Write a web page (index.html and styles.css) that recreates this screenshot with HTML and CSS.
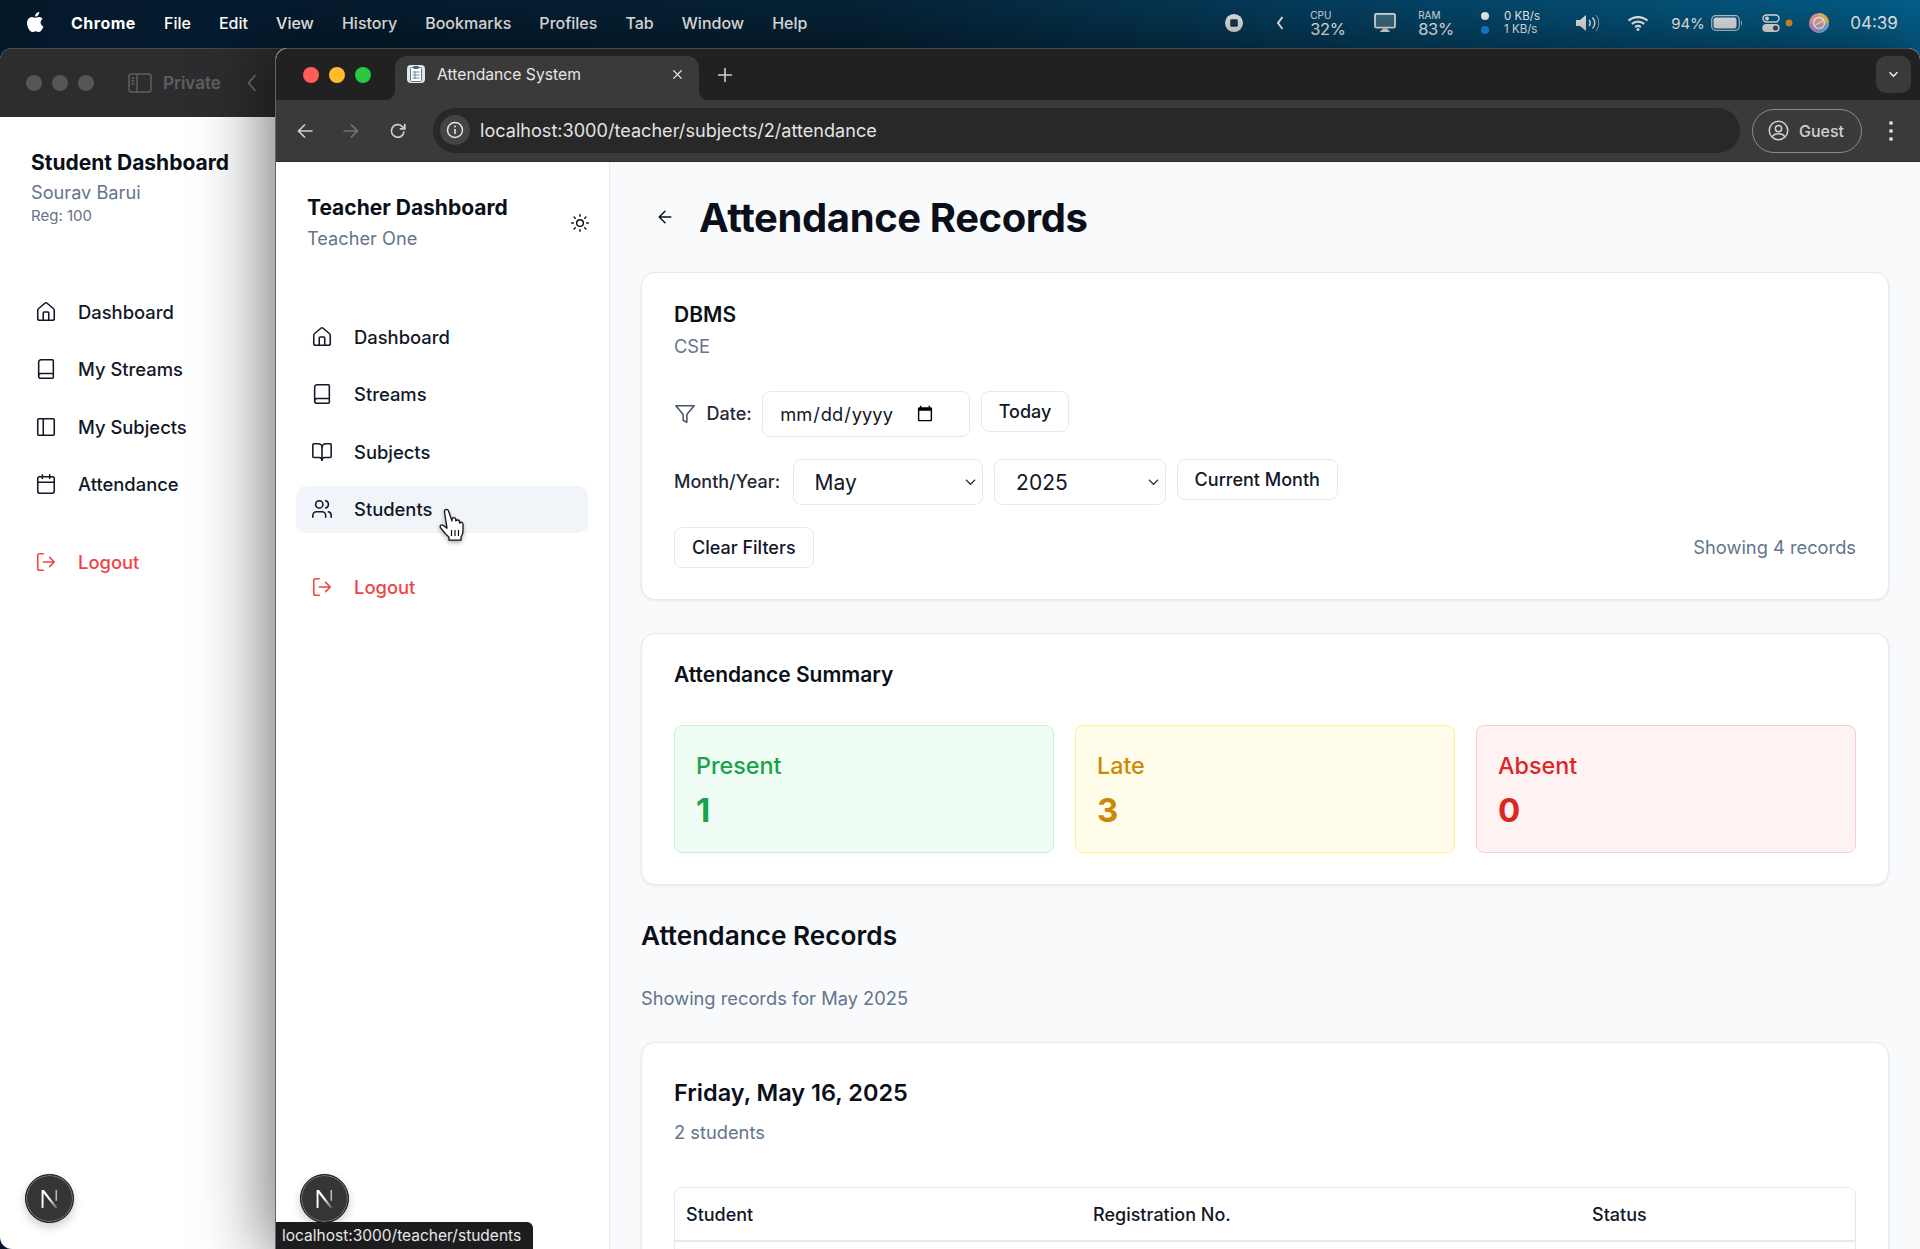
FILE: index.html
```html
<!DOCTYPE html>
<html lang="en">
<head>
<meta charset="utf-8">
<title>Attendance System</title>
<link rel="stylesheet" href="styles.css">
</head>
<body>
<div class="desktop">
  <header class="menubar">
    <svg class="apple" viewBox="0 0 20 24" width="20" height="24"><path fill="#fff" d="M14.6 12.6c0-2.5 2-3.7 2.1-3.8-1.2-1.7-3-1.9-3.6-1.9-1.5-.2-3 .9-3.8.9s-2-.9-3.3-.9c-1.7 0-3.3 1-4.1 2.5-1.8 3-.5 7.6 1.2 10.1.9 1.2 1.9 2.6 3.2 2.5 1.3 0 1.8-.8 3.3-.8s2 .8 3.3.8c1.4 0 2.2-1.2 3.1-2.5 1-1.4 1.4-2.8 1.4-2.9-.1 0-2.8-1.1-2.8-4zM12.100 5.200c.7-.9 1.200-2.100 1.100-3.300-1 0-2.300.7-3 1.500-.7.800-1.300 2-1.100 3.200 1.100.1 2.300-.6 3-1.400z"/></svg>
    <nav class="menus">
      <span class="menu-app">Chrome</span><span>File</span><span>Edit</span><span>View</span><span>History</span><span>Bookmarks</span><span>Profiles</span><span>Tab</span><span>Window</span><span>Help</span>
    </nav>
    <div class="status">
      <span class="st st-stop"><svg viewBox="0 0 20 20" width="19" height="19"><circle cx="10" cy="10" r="9.500" fill="#f2f2f2"/><rect x="6" y="6" width="8" height="8" rx="1.500" fill="#123b52"/></svg></span>
      <span class="st st-chev"><svg viewBox="0 0 8 14" width="8" height="14"><path d="M6.500 1 2 7l4.500 6" fill="none" stroke="#fff" stroke-width="2"/></svg></span>
      <span class="st st-cpu meter"><small>CPU</small><b>32%</b></span>
      <span class="st st-mon"><svg viewBox="0 0 24 22" width="23" height="20"><rect x="1" y="1" width="22" height="15" rx="1.500" fill="#3f6f85" stroke="#f0f0f0" stroke-width="2"/><path d="M9 17h6v2h2v2H7v-2h2z" fill="#f0f0f0"/></svg></span>
      <span class="st st-ram meter"><small>RAM</small><b>83%</b></span>
      <span class="st st-dots"><i class="dot-w"></i><i class="dot-b"></i></span>
      <span class="st st-net"><span>0 KB/s</span><span>1 KB/s</span></span>
      <span class="st st-vol"><svg viewBox="0 0 26 20" width="26" height="20"><path d="M1 7h4l6-5v16l-6-5H1z" fill="#f2f2f2"/><path d="M14 7c1.500 1.800 1.500 4.200 0 6M17.500 4.500c2.700 3.300 2.700 7.700 0 11" fill="none" stroke="#f2f2f2" stroke-width="1.500"/><path d="M21 2c3.700 4.800 3.700 11.200 0 16" fill="none" stroke="#9db5c2" stroke-width="1"/></svg></span>
      <span class="st st-wifi"><svg viewBox="0 0 24 18" width="23" height="17"><path d="M2 6.500c5.800-5 14.200-5 20 0M5.500 10c3.800-3.300 9.200-3.300 13 0M9 13.400c1.800-1.500 4.200-1.500 6 0" fill="none" stroke="#fff" stroke-width="2.300"/><circle cx="12" cy="16" r="1.600" fill="#fff"/></svg></span>
      <span class="st st-pct">94%</span>
      <span class="st st-batt"><svg viewBox="0 0 32 16" width="32" height="16"><rect x=".7" y=".7" width="27.600" height="14.600" rx="4" fill="none" stroke="#c5d4dc" stroke-width="1.200"/><rect x="2.500" y="2.500" width="23" height="11" rx="2.500" fill="#f0f0f0"/><path d="M30 5.500c1.300.5 1.300 4.500 0 5z" fill="#c5d4dc"/></svg></span>
      <span class="st st-ctrl"><svg viewBox="0 0 18 18" width="18" height="18"><rect x="1" y="1" width="16" height="7" rx="3.500" fill="none" stroke="#f2f2f2" stroke-width="1.400"/><circle cx="5" cy="4.500" r="2" fill="#f2f2f2"/><rect x=".3" y="10" width="17.400" height="8" rx="4" fill="#f2f2f2"/><circle cx="13.500" cy="14" r="2.500" fill="#33566a"/></svg></span>
      <span class="st st-orange"></span>
      <span class="st st-avatar"><svg viewBox="0 0 20 20" width="20" height="20"><circle cx="10" cy="10" r="10" fill="#f4a7a0"/><path d="M10 0a10 10 0 0 1 10 10h-6z" fill="#f6c94f"/><path d="M0 10a10 10 0 0 0 10 10l1-7z" fill="#c49be8"/><path d="M20 10a10 10 0 0 1-10 10l2-8z" fill="#7fbdf0"/><circle cx="10" cy="10" r="5.500" fill="none" stroke="#fff" stroke-width="1.500"/><path d="M5 13 15 7" stroke="#fff" stroke-width="1.200"/></svg></span>
      <span class="st st-time">04:39</span>
    </div>
  </header>

  <section class="win win-back">
    <div class="back-title">
      <span class="gl"></span><span class="gl"></span><span class="gl"></span>
      <svg class="back-panel" viewBox="0 0 24 20" width="24" height="20"><rect x="1" y="1" width="22" height="18" rx="2.500" fill="none" stroke="#5f5f61" stroke-width="1.500"/><path d="M9 1v18M3.500 5h3M3.500 8h3M3.500 11h3" stroke="#5f5f61" stroke-width="1.500" fill="none"/></svg>
      <span class="back-private">Private</span>
      <svg class="back-chev" viewBox="0 0 10 18" width="10" height="18"><path d="M8.500 1 1.500 9l7 8" fill="none" stroke="#6c6c6e" stroke-width="1.800"/></svg>
    </div>
    <aside class="sidebar sidebar-back">
      <div class="side-head">
        <div>
          <div class="side-title">Student Dashboard</div>
          <div class="side-sub">Sourav Barui</div>
          <div class="side-reg">Reg: 100</div>
        </div>
      </div>
      <nav class="side-nav">
        <a class="nav-item"><svg class="ic" viewBox="0 0 24 24"><path d="M15 21v-8a1 1 0 0 0-1-1h-4a1 1 0 0 0-1 1v8"/><path d="M3 10a2 2 0 0 1 .709-1.528l7-5.999a2 2 0 0 1 2.582 0l7 5.999A2 2 0 0 1 21 10v9a2 2 0 0 1-2 2H5a2 2 0 0 1-2-2z"/></svg>Dashboard</a>
        <a class="nav-item"><svg class="ic" viewBox="0 0 24 24"><path d="M4 19.500v-15A2.500 2.500 0 0 1 6.500 2H19a1 1 0 0 1 1 1v18a1 1 0 0 1-1 1H6.500a1 1 0 0 1 0-5H20"/></svg>My Streams</a>
        <a class="nav-item"><svg class="ic" viewBox="0 0 24 24"><rect x="3" y="3" width="18" height="18" rx="1"/><path d="M9 3v18"/></svg>My Subjects</a>
        <a class="nav-item"><svg class="ic" viewBox="0 0 24 24"><rect x="3" y="4" width="18" height="18" rx="2"/><path d="M16 2v4M8 2v4M3 10h18"/></svg>Attendance</a>
      </nav>
      <a class="nav-item nav-logout"><svg class="ic" viewBox="0 0 24 24"><path d="M9 21H5a2 2 0 0 1-2-2V5a2 2 0 0 1 2-2h4"/><path d="m16 17 5-5-5-5M21 12H9"/></svg>Logout</a>
    </aside>
    <span class="n-badge"><svg viewBox="0 0 20 20" width="24" height="24"><defs><linearGradient id="nb" x1="0" y1="0" x2="1" y2="1"><stop offset=".45" stop-color="#fff"/><stop offset="1" stop-color="#fff" stop-opacity=".15"/></linearGradient></defs><path d="M3 2.500h2L16.500 17.500h-2.200L4.600 5.300v12.200H3z" fill="url(#nb)"/><rect x="14.600" y="2.500" width="1.300" height="9" fill="#bbb"/></svg></span>
  </section>

  <section class="win win-front">
    <div class="tabbar">
      <span class="tl tl-r"></span><span class="tl tl-y"></span><span class="tl tl-g"></span>
      <div class="tab">
        <svg class="favicon" viewBox="0 0 20 20" width="20" height="20"><rect x="1" y="1" width="18" height="18" rx="4" fill="#dfe6ec"/><rect x="4.500" y="3.500" width="11" height="14" rx="1" fill="#fff" stroke="#5d7484"/><rect x="7.500" y="2" width="5" height="3" fill="#4d6678"/><path d="M6.500 8h7M6.500 11h7M6.500 14h7M9 7v8" stroke="#5f90a8"/></svg>
        <span class="tab-label">Attendance System</span>
        <svg class="tab-x" viewBox="0 0 12 12" width="11" height="11"><path d="m1.500 1.500 9 9M10.500 1.500l-9 9" stroke="#e8e8e8" stroke-width="1.500"/></svg>
      </div>
      <svg class="tab-plus" viewBox="0 0 14 14" width="14" height="14"><path d="M7 0v14M0 7h14" stroke="#cfcfcf" stroke-width="1.600"/></svg>
      <span class="tab-menu"><svg viewBox="0 0 12 8" width="11" height="7"><path d="m1.500 1.500 4.500 4.500 4.500-4.500" fill="none" stroke="#eee" stroke-width="1.800"/></svg></span>
    </div>
    <div class="toolbar">
      <svg class="tb-ic tb-back" viewBox="0 0 18 18" width="18" height="18"><path d="M16.500 9h-14M9 2.500 2.500 9 9 15.500" fill="none" stroke="#cfcfcf" stroke-width="1.700"/></svg>
      <svg class="tb-ic tb-fwd" viewBox="0 0 18 18" width="18" height="18"><path d="M1.500 9h14M9 2.500 15.500 9 9 15.500" fill="none" stroke="#757575" stroke-width="1.700"/></svg>
      <svg class="tb-ic tb-reload" viewBox="0 0 18 18" width="18" height="18"><path d="M15 9.500A6.300 6.300 0 1 1 13 4.300L15.500 6.500" fill="none" stroke="#cfcfcf" stroke-width="1.700"/><path d="M15.800 1.800v5h-5" fill="none" stroke="#cfcfcf" stroke-width="1.700"/></svg>
      <div class="omnibox">
        <span class="omni-info"><svg viewBox="0 0 18 18" width="18" height="18"><circle cx="9" cy="9" r="7.500" fill="none" stroke="#e6e6e6" stroke-width="1.500"/><path d="M9 8v5" stroke="#e6e6e6" stroke-width="1.600"/><circle cx="9" cy="5.500" r="1" fill="#e6e6e6"/></svg></span>
        <span class="omni-url">localhost:3000/teacher/subjects/2/attendance</span>
      </div>
      <div class="guest">
        <svg viewBox="0 0 22 22" width="21" height="21"><circle cx="11" cy="11" r="9.700" fill="none" stroke="#d0d0d0" stroke-width="1.600"/><circle cx="11" cy="9" r="3.300" fill="none" stroke="#d0d0d0" stroke-width="1.600"/><path d="M4.500 17.500c2-4.200 11-4.200 13 0" fill="none" stroke="#d0d0d0" stroke-width="1.600"/></svg>
        <span>Guest</span>
      </div>
      <span class="kebab"><i></i><i></i><i></i></span>
    </div>
    <div class="app">
      <aside class="sidebar">
        <div class="side-head">
          <div>
            <div class="side-title">Teacher Dashboard</div>
            <div class="side-sub">Teacher One</div>
          </div>
          <svg class="ic sun" viewBox="0 0 24 24"><circle cx="12" cy="12" r="4"/><path d="M12 2v2M12 20v2M4.930 4.930l1.410 1.410M17.660 17.660l1.410 1.410M2 12h2M20 12h2M6.340 17.660l-1.410 1.410M19.070 4.930l-1.410 1.410"/></svg>
        </div>
        <nav class="side-nav">
          <a class="nav-item"><svg class="ic" viewBox="0 0 24 24"><path d="M15 21v-8a1 1 0 0 0-1-1h-4a1 1 0 0 0-1 1v8"/><path d="M3 10a2 2 0 0 1 .709-1.528l7-5.999a2 2 0 0 1 2.582 0l7 5.999A2 2 0 0 1 21 10v9a2 2 0 0 1-2 2H5a2 2 0 0 1-2-2z"/></svg>Dashboard</a>
          <a class="nav-item"><svg class="ic" viewBox="0 0 24 24"><path d="M4 19.500v-15A2.500 2.500 0 0 1 6.500 2H19a1 1 0 0 1 1 1v18a1 1 0 0 1-1 1H6.500a1 1 0 0 1 0-5H20"/></svg>Streams</a>
          <a class="nav-item"><svg class="ic" viewBox="0 0 24 24"><path d="M12 7v14"/><path d="M3 18a1 1 0 0 1-1-1V4a1 1 0 0 1 1-1h5a4 4 0 0 1 4 4 4 4 0 0 1 4-4h5a1 1 0 0 1 1 1v13a1 1 0 0 1-1 1h-6a3 3 0 0 0-3 3 3 3 0 0 0-3-3z"/></svg>Subjects</a>
          <a class="nav-item nav-hover"><svg class="ic" viewBox="0 0 24 24"><path d="M16 21v-2a4 4 0 0 0-4-4H6a4 4 0 0 0-4 4v2"/><circle cx="9" cy="7" r="4"/><path d="M22 21v-2a4 4 0 0 0-3-3.870M16 3.130a4 4 0 0 1 0 7.750"/></svg>Students</a>
        </nav>
        <a class="nav-item nav-logout"><svg class="ic" viewBox="0 0 24 24"><path d="M9 21H5a2 2 0 0 1-2-2V5a2 2 0 0 1 2-2h4"/><path d="m16 17 5-5-5-5M21 12H9"/></svg>Logout</a>
      </aside>
      <main class="main">
        <div class="page-head">
          <svg class="ic back-arrow" viewBox="0 0 24 24"><path d="m12 19-7-7 7-7M19 12H5"/></svg>
          <h1>Attendance Records</h1>
        </div>
        <section class="card">
          <h3 class="subject">DBMS</h3>
          <p class="stream">CSE</p>
          <div class="filter-row">
            <svg class="ic filter-ic" viewBox="0 0 24 24"><path d="M22 3H2l8 9.460V19l4 2v-8.540z"/></svg>
            <label class="f-label" for="d">Date:</label>
            <input id="d" class="field date-field" type="date">
            <button class="btn">Today</button>
          </div>
          <div class="filter-row">
            <label class="f-label f-month" for="m">Month/Year:</label>
            <select id="m" class="field sel sel-m"><option>May</option></select>
            <select class="field sel sel-y" aria-label="Year"><option>2025</option></select>
            <button class="btn">Current Month</button>
          </div>
          <div class="filter-row filter-last">
            <button class="btn">Clear Filters</button>
            <span class="count">Showing 4 records</span>
          </div>
        </section>
        <section class="card card-summary">
          <h3 class="summary-title">Attendance Summary</h3>
          <div class="stats">
            <div class="stat stat-g"><div class="stat-l">Present</div><div class="stat-n">1</div></div>
            <div class="stat stat-y"><div class="stat-l">Late</div><div class="stat-n">3</div></div>
            <div class="stat stat-r"><div class="stat-l">Absent</div><div class="stat-n">0</div></div>
          </div>
        </section>
        <h2 class="rec-title">Attendance Records</h2>
        <p class="rec-sub">Showing records for May 2025</p>
        <section class="card card-day">
          <h3 class="day-title">Friday, May 16, 2025</h3>
          <p class="day-sub">2 students</p>
          <div class="table">
            <div class="thead"><span class="th-a">Student</span><span class="th-b">Registration No.</span><span>Status</span></div>
            <div class="tbody"></div>
          </div>
        </section>
      </main>
    </div>
    <span class="n-badge"><svg viewBox="0 0 20 20" width="24" height="24"><defs><linearGradient id="nf" x1="0" y1="0" x2="1" y2="1"><stop offset=".45" stop-color="#fff"/><stop offset="1" stop-color="#fff" stop-opacity=".15"/></linearGradient></defs><path d="M3 2.500h2L16.500 17.500h-2.200L4.600 5.300v12.200H3z" fill="url(#nf)"/><rect x="14.600" y="2.500" width="1.300" height="9" fill="#bbb"/></svg></span>
    <div class="status-bubble">localhost:3000/teacher/students</div>
    <svg class="cursor" viewBox="0 0 28 33" width="28" height="33"><path d="M5.500 4c-.6-2.600 3-3.600 4-1L13 13v-2c.5-1.800 3.300-1.800 3.800 0v2c.7-1.500 3.300-1.300 3.700.5V15c1-1.300 3.500-.8 3.500 1.200v7c0 3-1 4.500-2 6v3H10v-3c-3-2.500-6-6-8.500-9.500-1.200-2 1-3.500 2.500-2.500l4 3z" fill="#fff" stroke="#111" stroke-width="1.300" stroke-linejoin="round"/><path d="M12.500 22v6M16 22v6M19.500 22v6" stroke="#111" stroke-width="1.200"/></svg>
  </section>
</div>
</body>
</html>
```

FILE: styles.css
```css
* { box-sizing: border-box; }
html, body { margin: 0; padding: 0; height: 100%; overflow: hidden; }
body { font-family: Inter, "Noto Sans", sans-serif; color: #0b0f19; }
h1, h2, h3, p { margin: 0; }

.desktop { position: relative; width: 1920px; height: 1249px; overflow: hidden; background: linear-gradient(90deg, #04182a 0%, #06253a 45%, #05486c 75%, #04628f 100%); }

/* menu bar */
.menubar { height: 48px; display: flex; align-items: center; color: #fff; font-size: 16px; font-weight: 500; padding-bottom: 2px; }
.apple { margin-left: 26px; margin-top: -2px; }
.menus { display: flex; gap: 28.100px; margin-left: 25px; }
.menu-app { font-weight: 700; letter-spacing: .5px; }
.status { position: absolute; left: 0; right: 0; top: 0; height: 48px; }
.st { position: absolute; top: 23px; transform: translate(-50%, -50%); display: flex; }
.st-stop { left: 1234px; }
.st-chev { left: 1280px; }
.meter { top: 24px; flex-direction: column; }
.meter small { font-size: 10px; font-weight: 400; color: #e4edf2; line-height: 11px; }
.meter b { font-size: 16.500px; font-weight: 400; line-height: 17px; letter-spacing: -.3px; }
.st-cpu { left: 1328px; }
.st-mon { left: 1385px; }
.st-ram { left: 1436px; }
.st-dots { left: 1485px; flex-direction: column; gap: 6px; }
.dot-w, .dot-b { width: 8px; height: 8px; border-radius: 50%; background: #fff; display: block; }
.dot-b { background: #1d8ff2; }
.st-net { left: 1522px; flex-direction: column; font-size: 11.500px; font-weight: 400; line-height: 13px; }
.st-vol { left: 1588px; }
.st-wifi { left: 1638px; }
.st-pct { left: 1688px; font-size: 15px; font-weight: 400; }
.st-batt { left: 1727px; }
.st-ctrl { left: 1771px; }
.st-orange { left: 1789px; width: 7px; height: 7px; border-radius: 50%; background: #e09a2b; }
.st-avatar { left: 1819px; }
.st-time { left: 1874px; font-size: 17px; font-weight: 400; }

/* windows */
.win { position: absolute; top: 48px; bottom: 0; background: #fff; overflow: hidden; }
.win-back { left: 0; width: 340px; border-radius: 12px 0 0 12px; }
.win-front { left: 275px; right: 0; border-radius: 12px 12px 0 0; border-left: 1px solid #666; box-shadow: 0 0 70px 8px rgba(0,0,0,.55); display: flex; flex-direction: column; }

.back-title { height: 69px; background: #2d2d2f; display: flex; align-items: center; padding-left: 26px; border-top: 1px solid #4a4a4c; }
.gl { width: 16px; height: 16px; border-radius: 50%; background: #565658; margin-right: 10px; }
.back-panel { margin-left: 24px; }
.back-private { color: #5f5f61; font-size: 17px; font-weight: 600; margin-left: 11px; }
.back-chev { margin-left: 26px; }

/* front chrome */
.tabbar { height: 52px; background: #212121; border-radius: 12px 12px 0 0; border-top: 1px solid #4a4a4a; display: flex; align-items: flex-end; padding-left: 27px; position: relative; flex: none; }
.tl { width: 16px; height: 16px; border-radius: 50%; margin-right: 10px; align-self: flex-start; margin-top: 18px; }
.tl-r { background: #ff5f57; }
.tl-y { background: #febc2e; }
.tl-g { background: #28c840; }
.tab { position: relative; width: 304px; height: 44px; background: #3a3a3a; border-radius: 12px 12px 0 0; margin-left: 14px; display: flex; align-items: center; padding: 0 16px 8px 11px; color: #e6e6e6; font-size: 15.700px; }
.tab::before, .tab::after { content: ""; position: absolute; bottom: 0; width: 10px; height: 10px; }
.tab::before { left: -10px; background: radial-gradient(circle at 0 0, transparent 10px, #3a3a3a 10.500px); }
.tab::after { right: -10px; background: radial-gradient(circle at 100% 0, transparent 10px, #3a3a3a 10.500px); }
.tab-label { margin-left: 11px; flex: 1; }
.tab-plus { align-self: flex-start; margin: 19px 0 0 19px; }
.tab-menu { position: absolute; right: 9px; top: 7px; width: 35px; height: 37px; background: #3a3a3a; border-radius: 10px; display: flex; align-items: center; justify-content: center; }

.toolbar { height: 62px; background: #3a3a3a; border-bottom: 1px solid #2a2a2a; display: flex; align-items: center; padding-left: 20px; flex: none; }
.tb-fwd { margin-left: 28px; }
.tb-reload { margin-left: 29px; }
.omnibox { margin-left: 26px; width: 1307px; height: 45px; border-radius: 23px; background: #282828; display: flex; align-items: center; padding-left: 7px; margin-bottom: 1px; }
.omni-info { width: 30px; height: 30px; border-radius: 50%; background: #444; display: flex; align-items: center; justify-content: center; }
.omni-url { margin-left: 10px; font-size: 18.100px; color: #e3e3e3; }
.guest { margin-left: 12px; width: 110px; height: 44px; border: 1.500px solid #8b8b8b; border-radius: 22px; display: flex; align-items: center; gap: 10px; padding-left: 15px; color: #d0d0d0; font-size: 16px; font-weight: 500; }
.kebab { margin-left: 27px; display: flex; flex-direction: column; gap: 4px; }
.kebab i { width: 4px; height: 4px; border-radius: 50%; background: #d0d0d0; display: block; }

/* app */
.app { flex: 1; display: flex; min-height: 0; overflow: hidden; }
.sidebar { width: 334px; flex: none; background: #fff; padding-top: 32px; }
.app .sidebar { border-right: 1px solid #e6eaf0; }
.side-head { display: flex; justify-content: space-between; align-items: center; padding: 0 19px 0 31px; }
.side-title { font-size: 21px; font-weight: 700; line-height: 28px; }
.side-sub { font-size: 18.200px; color: #64748b; line-height: 30px; margin-top: 1px; }
.sidebar-back .side-sub { margin-top: 0; }
.side-reg { font-size: 15px; color: #64748b; line-height: 20px; margin-top: -1px; }
.ic { width: 22px; height: 22px; fill: none; stroke: currentColor; stroke-width: 1.700; stroke-linecap: round; stroke-linejoin: round; flex: none; }
.sun { width: 20px; height: 20px; margin-top: -2px; }
.side-nav { display: flex; flex-direction: column; gap: 10.500px; margin: 60px 21px 0 20px; }
.sidebar-back .side-nav { margin-top: 62px; }
.nav-item { height: 47px; display: flex; align-items: center; gap: 21px; padding-left: 15px; border-radius: 10px; font-size: 18.400px; font-weight: 500; color: #111827; }
.nav-hover { background: #f1f5f9; }
.nav-logout { color: #ef4444; margin: 31px 21px 0 20px; }

.main { flex: 1; background: #f8fafc; padding: 0 31px; min-width: 0; overflow: hidden; }
.page-head { display: flex; align-items: center; height: 110px; }
.back-arrow { width: 20px; height: 20px; margin-left: 14px; margin-right: 24px; }
h1 { font-size: 40px; font-weight: 700; letter-spacing: -.4px; }

.card { background: #fff; border: 1px solid #e5e9f0; border-radius: 14px; box-shadow: 0 1px 3px rgba(15,23,42,.08); padding: 27px 32px 31px; }
.subject { font-size: 21px; font-weight: 600; line-height: 30px; }
.stream { font-size: 18.300px; color: #64748b; line-height: 30px; margin-top: 1px; margin-bottom: 30px; }
.filter-row { display: flex; align-items: flex-start; gap: 10.500px; margin-top: 22px; }
.filter-row:first-of-type { margin-top: 0; }
.filter-ic { width: 22px; height: 22px; margin-top: 12px; color: #475569; }
.f-label { font-size: 18px; font-weight: 500; line-height: 46px; color: #1f2937; }
.f-month { margin-right: 2px; }
.field { height: 46px; background: #fff; border: 1px solid #e5e9f0; border-radius: 8px; color: #111827; font-family: Inter, sans-serif; font-size: 18.300px; }
.date-field { width: 208px; padding: 0 16px; }
.date-field::-webkit-calendar-picker-indicator { margin-right: 17px; }
.sel { appearance: none; font-size: 21px; padding: 0 24px 0 21px; background: #fff url("data:image/svg+xml,%3Csvg xmlns='http://www.w3.org/2000/svg' viewBox='0 0 12 8'%3E%3Cpath d='m1 1.500 5 5 5-5' fill='none' stroke='%23333' stroke-width='1.300'/%3E%3C/svg%3E") no-repeat right 6px center / 11px 8px; }
.sel-m { width: 190px; margin-right: 1px; }
.sel-y { width: 172px; }
.btn { height: 41px; padding: 0 17px; background: #fff; border: 1px solid #e5e9f0; border-radius: 8px; font-family: Inter, sans-serif; font-size: 18px; font-weight: 500; color: #111827; }
.filter-last { justify-content: space-between; align-items: center; }
.count { font-size: 18.300px; color: #64748b; margin-top: -1px; }

.card-summary { margin-top: 33px; padding: 26px 32px 31px; }
.summary-title { font-size: 21px; font-weight: 600; line-height: 30px; }
.stats { display: grid; grid-template-columns: repeat(3, 1fr); gap: 21px; margin-top: 35px; }
.stat { height: 128px; border-radius: 8px; border: 1px solid; padding: 24px 21px 0; }
.stat-l { font-size: 23.300px; font-weight: 500; line-height: 32px; }
.stat-n { font-size: 33px; font-weight: 700; line-height: 40px; margin-top: 8px; }
.stat-g { background: #f0fdf4; border-color: #bbf7d0; color: #16a34a; }
.stat-y { background: #fffdea; border-color: #fef08a; color: #ca8a04; }
.stat-r { background: #fef2f2; border-color: #fecaca; color: #dc2626; }

.rec-title { font-size: 26.200px; font-weight: 600; line-height: 36px; margin-top: 33px; }
.rec-sub { font-size: 18.300px; color: #64748b; line-height: 28px; margin-top: 30px; }
.card-day { margin-top: 30px; height: 300px; padding-top: 32px; }
.day-title { font-size: 23.500px; font-weight: 600; line-height: 36px; }
.day-sub { font-size: 18.300px; color: #64748b; line-height: 28px; margin-top: 7px; }
.table { margin-top: 41px; border: 1px solid #e5e9f0; border-radius: 8px; }
.thead { height: 54px; display: flex; align-items: center; padding-left: 11px; font-size: 18px; font-weight: 500; color: #111827; border-bottom: 2px solid #e5e9f0; }
.th-a { width: 407px; }
.th-b { width: 499px; }
.tbody { height: 40px; }

.n-badge { position: absolute; width: 49px; height: 49px; left: 25px; bottom: 26px; border-radius: 50%; background: #353535; border: 1.500px solid #111; box-shadow: 0 0 0 1px #777 inset, 0 4px 10px rgba(0,0,0,.2); display: flex; align-items: center; justify-content: center; }
.win-front .n-badge { left: 24px; }
.status-bubble { position: absolute; left: 0; bottom: 0; height: 27px; width: 257px; background: #1d1d1f; color: #e8e8e8; border-radius: 0 6px 0 0; font-size: 15.500px; line-height: 27px; padding-left: 6px; white-space: nowrap; }
.cursor { position: absolute; left: 163px; top: 460px; filter: drop-shadow(0 2px 2px rgba(0,0,0,.3)); }
```
